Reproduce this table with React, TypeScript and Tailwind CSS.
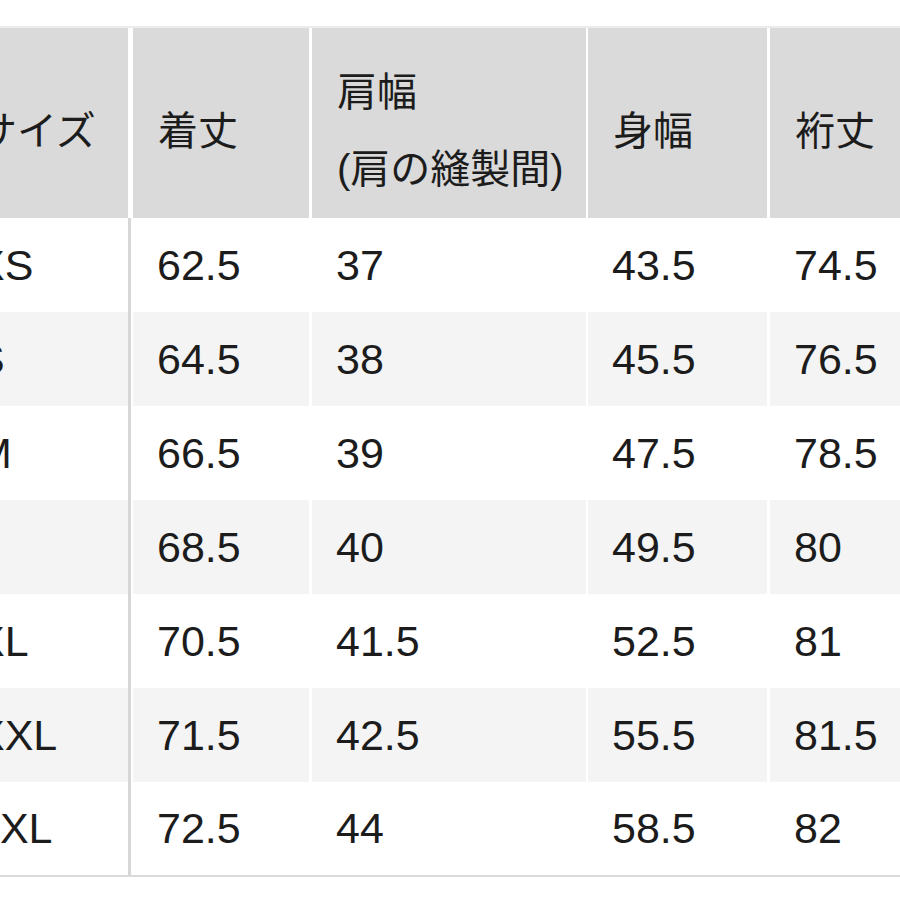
import React from 'react';

const rows = [
  ['XS', '62.5', '37', '43.5', '74.5'],
  ['S', '64.5', '38', '45.5', '76.5'],
  ['M', '66.5', '39', '47.5', '78.5'],
  ['L', '68.5', '40', '49.5', '80'],
  ['XL', '70.5', '41.5', '52.5', '81'],
  ['XXL', '71.5', '42.5', '55.5', '81.5'],
  ['3XL', '72.5', '44', '58.5', '82'],
];

// widths and left gaps of the five columns
const headCols = ['w-[176px]', 'ml-[5px] w-[176px]', 'ml-[3px] w-[274px]', 'ml-[2px] w-[179px]', 'ml-[3px] w-[180px]'];
const bodyCols = [
  'w-[179px] border-r-[3px] border-[#d6d6d6]',
  'ml-[2px] w-[176px]',
  'ml-[3px] w-[274px]',
  'ml-[2px] w-[179px]',
  'ml-[3px] w-[180px]',
];

const SizeTable = () => {
  return (
    <div
      className="w-[900px] h-[900px] overflow-hidden bg-white pt-[26px] text-[#1c1c1c]"
      style={{ fontFamily: '"Liberation Sans", "Noto Sans CJK JP", sans-serif' }}
    >
      <div className="-ml-[48px] w-[1000px] border-t-2 border-b-2 border-t-[#ececec] border-b-[#d9d9d9]">
        <div className="flex h-[190px] text-[40px] leading-[77px]">
          {['サイズ', '着丈', null, '身幅', '裄丈'].map((label, i) => (
            <div key={i} className={`${headCols[i]} flex items-center bg-[#dadada] pl-[25px] pt-[16px]`}>
              {label ?? (
                <div>
                  肩幅
                  <br />
                  (肩の縫製間)
                </div>
              )}
            </div>
          ))}
        </div>
        {rows.map((row, r) => (
          <div key={row[0]} className={`flex ${r === 6 ? 'h-[93px]' : 'h-[94px]'} text-[43px]`}>
            {row.map((cell, i) => (
              <div
                key={i}
                className={`${bodyCols[i]} flex items-center pl-[24px] ${r % 2 === 1 ? 'bg-[#f4f4f4]' : 'bg-white'}`}
              >
                {cell}
              </div>
            ))}
          </div>
        ))}
      </div>
    </div>
  );
};

export default function App() {
  return <SizeTable />;
}
